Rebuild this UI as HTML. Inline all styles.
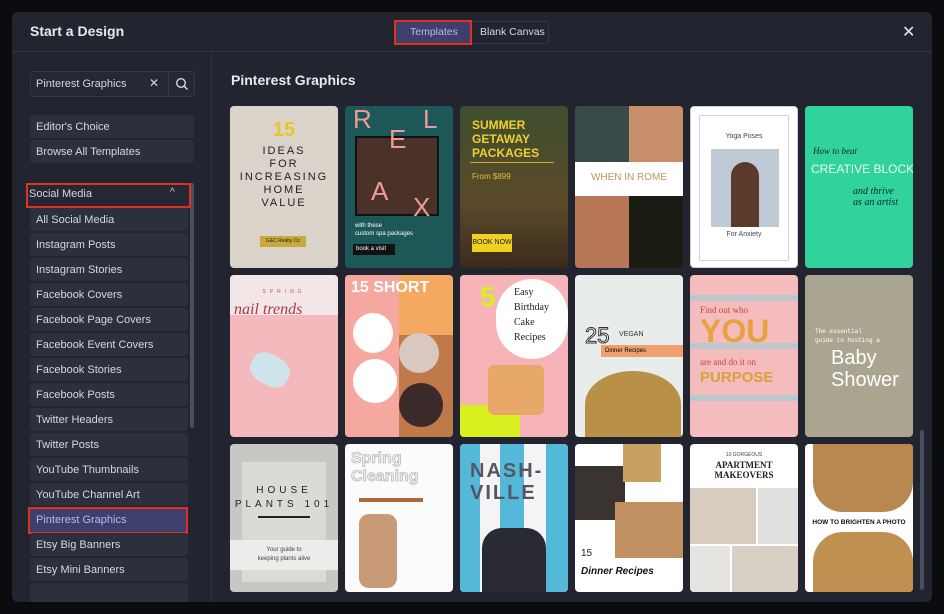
<!DOCTYPE html>
<html><head><meta charset="utf-8"><style>
*{margin:0;padding:0;box-sizing:border-box}
body{width:944px;height:614px;background:#0b0c10;font-family:"Liberation Sans",sans-serif;position:relative;overflow:hidden}
.modal{position:absolute;left:12px;top:12px;width:920px;height:590px;background:#22242f;border-radius:6px;overflow:hidden}
.hdr{position:absolute;left:0;top:0;width:920px;height:40px;border-bottom:1px solid #2f3240}
.t{position:absolute;color:#e8e9ee}
.side{position:absolute;left:0;top:41px;width:200px;height:549px;border-right:1px solid #2f3240}
.it{position:absolute;left:18px;width:164px;height:23px;background:#2c2f3c;border-radius:3px;color:#d6d8e0;font-size:11px;line-height:24px;padding-left:6px}
.card{position:absolute;width:108px;height:162px;border-radius:4px;overflow:hidden}
.c{position:absolute;white-space:nowrap}
</style></head><body>
<div class="modal">
 <div class="hdr">
  <div class="t" style="left:18px;top:11px;font-size:14px;font-weight:bold">Start a Design</div>
  <div style="position:absolute;left:385px;top:9px;width:152px;height:23px;border:1px solid #353848;border-radius:3px"></div>
  <div style="position:absolute;left:382px;top:8px;width:78px;height:25px;border:2px solid #e0301e;background:#3f3f6e"></div>
  <div class="t" style="left:398px;top:14px;font-size:10.5px;color:#b8b9e8">Templates</div>
  <div class="t" style="left:468px;top:14px;font-size:10.5px;color:#d6d8e0">Blank Canvas</div>
  <div class="t" style="left:890px;top:10px;font-size:16px;color:#e8e9ee">✕</div>
 </div>
 <div class="side">
  <div style="position:absolute;left:18px;top:18px;width:165px;height:26px;border:1px solid #353848;border-radius:3px;background:#252834"></div>
  <div style="position:absolute;left:156px;top:18px;width:1px;height:26px;background:#353848"></div>
  <div class="t" style="left:24px;top:25px;font-size:11px;color:#d6d8e0">Pinterest Graphics</div>
  <div class="t" style="left:137px;top:23px;font-size:12px;color:#d6d8e0">✕</div>
  <svg style="position:absolute;left:163px;top:24px" width="14" height="14" viewBox="0 0 14 14"><circle cx="6" cy="6" r="4.3" fill="none" stroke="#d6d8e0" stroke-width="1.4"/><line x1="9.2" y1="9.2" x2="12.5" y2="12.5" stroke="#d6d8e0" stroke-width="1.4"/></svg>
  <div class="it" style="top:62px">Editor's Choice</div>
  <div class="it" style="top:87px">Browse All Templates</div>
  <div style="position:absolute;left:178px;top:130px;width:4px;height:245px;background:#4a4e5e;border-radius:2px"></div>
  <div style="position:absolute;left:14px;top:130px;width:165px;height:25px;border:2px solid #e0301e;background:#252834"></div>
  <div class="t" style="left:17px;top:135px;font-size:11px;color:#d6d8e0">Social Media</div>
  <div class="t" style="left:158px;top:134px;font-size:10px;color:#d6d8e0">^</div>
  <div class="it" style="top:155px;width:158px">All Social Media</div>
  <div class="it" style="top:180px;width:158px">Instagram Posts</div>
  <div class="it" style="top:205px;width:158px">Instagram Stories</div>
  <div class="it" style="top:230px;width:158px">Facebook Covers</div>
  <div class="it" style="top:255px;width:158px">Facebook Page Covers</div>
  <div class="it" style="top:280px;width:158px">Facebook Event Covers</div>
  <div class="it" style="top:305px;width:158px">Facebook Stories</div>
  <div class="it" style="top:330px;width:158px">Facebook Posts</div>
  <div class="it" style="top:355px;width:158px">Twitter Headers</div>
  <div class="it" style="top:380px;width:158px">Twitter Posts</div>
  <div class="it" style="top:405px;width:158px">YouTube Thumbnails</div>
  <div class="it" style="top:430px;width:158px">YouTube Channel Art</div>
  <div style="position:absolute;left:16px;top:454px;width:160px;height:27px;border:2px solid #e0301e;background:#3f3f6e"></div>
  <div class="t" style="left:24px;top:461px;font-size:11px;color:#b8b9e8">Pinterest Graphics</div>
  <div class="it" style="top:480px;width:158px">Etsy Big Banners</div>
  <div class="it" style="top:505px;width:158px">Etsy Mini Banners</div>
  <div class="it" style="top:530px;width:158px"></div>
 </div>
 <div class="t" style="left:219px;top:60px;font-size:14px;font-weight:bold">Pinterest Graphics</div>
 <div style="position:absolute;left:908px;top:418px;width:4px;height:160px;background:#4a4e5e;border-radius:2px"></div>
</div>
<!-- row 1 -->
<div class="card" style="left:230px;top:106px;background:#d9d3ca;text-align:center;color:#222;font-size:11px;letter-spacing:2px;line-height:13px">
 <div style="padding-top:18px;color:#e8c62a;font-weight:bold;font-size:20px;letter-spacing:0">15</div>
 <div style="margin-top:8px">IDEAS<br>FOR<br>INCREASING<br>HOME<br>VALUE</div>
 <div class="c" style="left:30px;top:130px;width:46px;height:11px;background:#c9a93a;font-size:5px;letter-spacing:0;line-height:11px">G&amp;C Realty Co</div>
</div>
<div class="card" style="left:345px;top:106px;background:#1d5858">
 <div class="c" style="left:10px;top:30px;width:84px;height:80px;background:#4a3228;border:2px solid #111"></div>
 <div class="c" style="left:8px;top:-2px;color:#f09a98;font-size:26px">R</div>
 <div class="c" style="left:78px;top:-2px;color:#f09a98;font-size:26px">L</div>
 <div class="c" style="left:44px;top:18px;color:#f09a98;font-size:26px">E</div>
 <div class="c" style="left:26px;top:70px;color:#f09a98;font-size:26px">A</div>
 <div class="c" style="left:68px;top:86px;color:#f09a98;font-size:26px">X</div>
 <div class="c" style="left:10px;top:116px;color:#fff;font-size:6px;line-height:8px">with these<br>custom spa packages</div>
 <div class="c" style="left:8px;top:138px;width:42px;height:11px;background:#111;color:#fff;font-size:6px;line-height:11px;padding-left:3px">book a visit</div>
</div>
<div class="card" style="left:460px;top:106px;background:linear-gradient(#3e4e2e,#5a4a2a 60%,#3a2a1a)">
 <div class="c" style="left:12px;top:12px;color:#f0d030;font-size:12px;font-weight:bold;line-height:14px">SUMMER<br>GETAWAY<br>PACKAGES</div>
 <div class="c" style="left:10px;top:56px;width:84px;height:1px;background:#d0b020"></div>
 <div class="c" style="left:12px;top:66px;color:#e0c030;font-size:8px">From $899</div>
 <div class="c" style="left:12px;top:128px;width:40px;height:18px;background:#f0d020;color:#222;font-size:7px;line-height:18px;text-align:center">BOOK NOW</div>
</div>
<div class="card" style="left:575px;top:106px;background:#5a4a3a">
 <div class="c" style="left:0;top:0;width:54px;height:56px;background:#3a4a48"></div>
 <div class="c" style="left:54px;top:0;width:54px;height:56px;background:#c8906a"></div>
 <div class="c" style="left:0;top:56px;width:108px;height:34px;background:#fff;text-align:center;color:#b89858;font-size:10px;padding-top:10px">WHEN IN ROME</div>
 <div class="c" style="left:0;top:90px;width:54px;height:72px;background:#b87858"></div>
 <div class="c" style="left:54px;top:90px;width:54px;height:72px;background:#1a1c14"></div>
</div>
<div class="card" style="left:690px;top:106px;background:#fff;border:1px solid #ccd">
 <div class="c" style="left:8px;top:8px;width:90px;height:146px;border:1px solid #d0d0e8"></div>
 <div class="c" style="left:0;width:106px;top:26px;text-align:center;font-size:7px;color:#445">Yoga Poses</div>
 <div class="c" style="left:20px;top:42px;width:68px;height:78px;background:#c0cad6"></div>
 <div class="c" style="left:40px;top:55px;width:28px;height:65px;background:#5a3a2a;border-radius:14px 14px 0 0"></div>
 <div class="c" style="left:0;width:106px;top:124px;text-align:center;font-size:7px;color:#445">For Anxiety</div>
</div>
<div class="card" style="left:805px;top:106px;background:#2fd39b;color:#123">
 <div class="c" style="left:8px;top:40px;font-size:9px;font-style:italic;font-family:'Liberation Serif',serif">How to beat</div>
 <div class="c" style="left:6px;top:56px;font-size:12px;color:#e8fff4">CREATIVE BLOCK</div>
 <div class="c" style="left:48px;top:80px;font-size:10px;font-style:italic;font-family:'Liberation Serif',serif;line-height:11px">and thrive<br>as an artist</div>
</div>
<!-- row 2 -->
<div class="card" style="left:230px;top:275px;background:#f4b9bd">
 <div class="c" style="left:0;top:0;width:108px;height:40px;background:#f3e6e6"></div>
 <div class="c" style="left:0;width:108px;top:14px;text-align:center;font-size:5px;letter-spacing:4px;color:#b55">SPRING</div>
 <div class="c" style="left:4px;top:26px;font-size:16px;color:#a83a4a;font-style:italic;font-family:'Liberation Serif',serif">nail trends</div>
 <div class="c" style="left:20px;top:80px;width:40px;height:30px;background:#cfe4ea;border-radius:40%;transform:rotate(30deg)"></div>
</div>
<div class="card" style="left:345px;top:275px;background:#f3aa60">
 <div class="c" style="left:0;top:0;width:54px;height:162px;background:#f4a8a0"></div>
 <div class="c" style="left:54px;top:60px;width:54px;height:102px;background:#c07a4a"></div>
 <div class="c" style="left:6px;top:4px;color:#fff;font-size:16px;font-weight:bold">15 SHORT</div>
 <div class="c" style="left:8px;top:38px;width:40px;height:40px;border-radius:50%;background:#fff"></div>
 <div class="c" style="left:54px;top:58px;width:40px;height:40px;border-radius:50%;background:#d8c8c0"></div>
 <div class="c" style="left:8px;top:84px;width:44px;height:44px;border-radius:50%;background:#fff"></div>
 <div class="c" style="left:54px;top:108px;width:44px;height:44px;border-radius:50%;background:#3a2a2a"></div>
</div>
<div class="card" style="left:460px;top:275px;background:#f6b4b8">
 <div class="c" style="left:36px;top:4px;width:72px;height:80px;background:#fff;border-radius:36px"></div>
 <div class="c" style="left:20px;top:6px;font-size:28px;color:#d8f020;font-weight:bold">5</div>
 <div class="c" style="left:54px;top:10px;font-size:10px;font-family:'Liberation Serif',serif;color:#222;line-height:15px">Easy<br>Birthday<br>Cake<br>Recipes</div>
 <div class="c" style="left:0;top:130px;width:60px;height:32px;background:#d8f020"></div>
 <div class="c" style="left:28px;top:90px;width:56px;height:50px;background:#e8a868;border-radius:6px"></div>
</div>
<div class="card" style="left:575px;top:275px;background:#e8ecea">
 <div class="c" style="left:10px;top:48px;font-size:22px;color:#fff;-webkit-text-stroke:1px #333">25</div>
 <div class="c" style="left:44px;top:56px;font-size:7px;color:#333">VEGAN</div>
 <div class="c" style="left:26px;top:70px;width:82px;height:12px;background:#f0a070;font-size:6px;line-height:12px;padding-left:4px">Dinner Recipes</div>
 <div class="c" style="left:10px;top:96px;width:96px;height:66px;background:#b89048;border-radius:50% 50% 0 0"></div>
</div>
<div class="card" style="left:690px;top:275px;background:#f4bcbc">
 <div class="c" style="left:0;top:20px;width:108px;height:6px;background:#b8c8cc"></div>
 <div class="c" style="left:0;top:68px;width:108px;height:6px;background:#b8c8cc"></div>
 <div class="c" style="left:0;top:120px;width:108px;height:6px;background:#b8c8cc"></div>
 <div class="c" style="left:10px;top:30px;font-size:9px;color:#c43;font-family:'Liberation Serif',serif">Find out who</div>
 <div class="c" style="left:10px;top:38px;font-size:32px;color:#e8a040;font-weight:bold">YOU</div>
 <div class="c" style="left:10px;top:82px;font-size:9px;color:#c43;font-family:'Liberation Serif',serif">are and do it on</div>
 <div class="c" style="left:10px;top:94px;font-size:15px;color:#d8a040;font-weight:bold">PURPOSE</div>
</div>
<div class="card" style="left:805px;top:275px;background:#aaa590;color:#fff">
 <div class="c" style="left:10px;top:52px;font-size:6px;line-height:9px;font-family:'Liberation Mono',monospace">The essential<br>guide to hosting a</div>
 <div class="c" style="left:26px;top:72px;font-size:20px;line-height:22px">Baby<br>Shower</div>
</div>
<!-- row 3 -->
<div class="card" style="left:230px;top:444px;background:#c9c7c3;height:148px">
 <div class="c" style="left:12px;top:18px;width:84px;height:120px;background:#dcdad6"></div>
 <div class="c" style="left:0;width:108px;top:40px;text-align:center;font-size:10px;letter-spacing:4px;color:#222;line-height:14px">HOUSE<br>PLANTS 101</div>
 <div class="c" style="left:28px;top:72px;width:52px;height:2px;background:#222"></div>
 <div class="c" style="left:0;top:96px;width:108px;height:30px;background:#eeecea;text-align:center;font-size:6px;color:#444;padding-top:6px;line-height:9px">Your guide to<br>keeping plants alive</div>
</div>
<div class="card" style="left:345px;top:444px;background:#fbfbfb;height:148px">
 <div class="c" style="left:6px;top:6px;font-size:16px;color:#eee;-webkit-text-stroke:0.6px #aaa;line-height:18px;font-weight:bold">Spring<br>Cleaning</div>
 <div class="c" style="left:14px;top:54px;width:64px;height:4px;background:#a86a3a"></div>
 <div class="c" style="left:14px;top:70px;width:38px;height:74px;background:#c89a78;border-radius:10px"></div>
</div>
<div class="card" style="left:460px;top:444px;background:#f4f4f4;height:148px">
 <div class="c" style="left:0;top:0;width:20px;height:148px;background:#54b8d8"></div>
 <div class="c" style="left:40px;top:0;width:24px;height:148px;background:#54b8d8"></div>
 <div class="c" style="left:86px;top:0;width:22px;height:148px;background:#54b8d8"></div>
 <div class="c" style="left:10px;top:16px;font-size:20px;font-weight:bold;color:#556;letter-spacing:2px;line-height:22px">NASH-<br>VILLE</div>
 <div class="c" style="left:22px;top:84px;width:64px;height:64px;background:#2a2a34;border-radius:20px 20px 0 0"></div>
</div>
<div class="card" style="left:575px;top:444px;background:#fff;height:148px">
 <div class="c" style="left:0;top:22px;width:50px;height:54px;background:#3a3430"></div>
 <div class="c" style="left:48px;top:0;width:38px;height:38px;background:#c8a060"></div>
 <div class="c" style="left:40px;top:58px;width:68px;height:56px;background:#c09060"></div>
 <div class="c" style="left:6px;top:104px;font-size:10px;color:#222">15</div>
 <div class="c" style="left:6px;top:122px;font-size:10px;font-style:italic;font-weight:bold;color:#111">Dinner Recipes</div>
</div>
<div class="card" style="left:690px;top:444px;background:#fff;height:148px">
 <div class="c" style="left:0;width:108px;top:8px;text-align:center;font-size:5px;color:#444">10 GORGEOUS</div>
 <div class="c" style="left:0;width:108px;top:16px;text-align:center;font-size:9px;font-weight:bold;font-family:'Liberation Serif',serif;color:#222;line-height:10px">APARTMENT<br>MAKEOVERS</div>
 <div class="c" style="left:0;top:44px;width:66px;height:56px;background:#d8ccc0"></div>
 <div class="c" style="left:68px;top:44px;width:40px;height:56px;background:#e0e0de"></div>
 <div class="c" style="left:0;top:102px;width:40px;height:46px;background:#e6e4e0"></div>
 <div class="c" style="left:42px;top:102px;width:66px;height:46px;background:#d8d0c4"></div>
</div>
<div class="card" style="left:805px;top:444px;background:#fff;height:148px">
 <div class="c" style="left:8px;top:0;width:100px;height:68px;background:#b88850;border-radius:0 0 30px 30px"></div>
 <div class="c" style="left:6px;top:72px;width:96px;height:14px;background:#fff;font-size:6.5px;font-weight:bold;color:#111;line-height:14px;text-align:center">HOW TO BRIGHTEN A PHOTO</div>
 <div class="c" style="left:8px;top:88px;width:100px;height:60px;background:#c09050;border-radius:30px 30px 0 0"></div>
</div>
</body></html>
